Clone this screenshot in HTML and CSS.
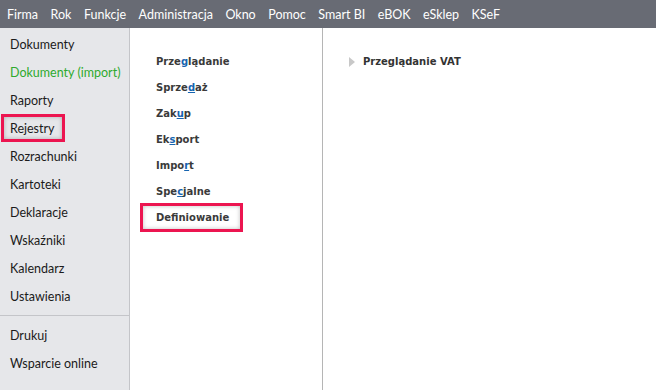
FILE: index.html
```html
<!DOCTYPE html>
<html lang="pl">

<head>
    <meta charset="UTF-8">
    <title>Rejestry</title>
    <link rel="stylesheet" href="styles.css">
</head>

<body>
    <div class="menubar">
        <span>Firma</span>
        <span>Rok</span>
        <span>Funkcje</span>
        <span>Administracja</span>
        <span>Okno</span>
        <span>Pomoc</span>
        <span>Smart BI</span>
        <span>eBOK</span>
        <span>eSklep</span>
        <span>KSeF</span>
    </div>

    <div class="main">
        <div class="sidebar">
            <div class="side-item">Dokumenty</div>
            <div class="side-item green">Dokumenty (import)</div>
            <div class="side-item">Raporty</div>
            <div class="side-item"><span class="mark">Rejestry</span></div>
            <div class="side-item">Rozrachunki</div>
            <div class="side-item">Kartoteki</div>
            <div class="side-item">Deklaracje</div>
            <div class="side-item">Wskaźniki</div>
            <div class="side-item">Kalendarz</div>
            <div class="side-item">Ustawienia</div>
            <div class="separator"></div>
            <div class="side-item">Drukuj</div>
            <div class="side-item">Wsparcie online</div>
        </div>

        <div class="submenu">
            <div class="sub-item">Prze<u>g</u>lądanie</div>
            <div class="sub-item">Sprze<u>d</u>aż</div>
            <div class="sub-item">Zak<u>u</u>p</div>
            <div class="sub-item">Ek<u>s</u>port</div>
            <div class="sub-item">Impo<u>r</u>t</div>
            <div class="sub-item">Spe<u>c</u>jalne</div>
            <div class="sub-item"><span class="mark">Def<u>i</u>niowanie</span></div>
        </div>

        <div class="content">
            <div class="tree-item"><span class="arrow"></span>Przeglądanie VAT</div>
        </div>
    </div>
</body>

</html>
```
FILE: styles.css
```css
body {
    margin: 0;
    font-family: Lato, sans-serif;
    background: #fff;
    width: 656px;
    height: 390px;
    overflow: hidden;
}

.menubar {
    height: 28px;
    background: #686b74;
    display: flex;
    align-items: center;
    gap: 12.5px;
    padding-left: 7px;
    color: #fff;
    font-size: 12.5px;
}

.main {
    display: flex;
    height: 362px;
}

.sidebar {
    width: 129px;
    background: #e6e7ea;
    border-right: 1px solid #c4c5c9;
    padding-top: 2px;
}

.side-item {
    height: 28px;
    display: flex;
    align-items: center;
    padding-left: 10px;
    font-size: 12.5px;
    color: #1b1b1b;
}

.green {
    color: #2eaa2e;
}

.separator {
    border-top: 1px solid #c4c5c9;
    margin: 5px 0 5px;
}

.mark {
    position: relative;
}

.mark::before {
    content: "";
    position: absolute;
    border: 3px solid #ec1550;
    box-shadow: inset 0 0 4px rgba(0, 0, 0, 0.25);
}

.side-item .mark::before {
    left: -9px;
    right: -10px;
    top: -7px;
    bottom: -6px;
}

.submenu {
    width: 192px;
    border-right: 1px solid #b5b5b5;
    padding-top: 20px;
}

.sub-item {
    height: 26px;
    display: flex;
    align-items: center;
    padding-left: 26px;
    font-family: "DejaVu Sans", sans-serif;
    font-weight: bold;
    font-size: 10px;
    color: #3a3a3a;
}

.sub-item u {
    color: #1664b0;
}

.sub-item .mark::before {
    left: -16px;
    right: -14px;
    top: -9px;
    bottom: -9px;
}

.content {
    flex: 1;
    padding: 28px 0 0 26px;
}

.tree-item {
    display: flex;
    align-items: center;
    font-family: "DejaVu Sans", sans-serif;
    font-weight: bold;
    font-size: 10px;
    color: #333;
}

.arrow {
    width: 0;
    height: 0;
    border-top: 5px solid transparent;
    border-bottom: 5px solid transparent;
    border-left: 6px solid #c8c8c8;
    margin-right: 8px;
}
```
